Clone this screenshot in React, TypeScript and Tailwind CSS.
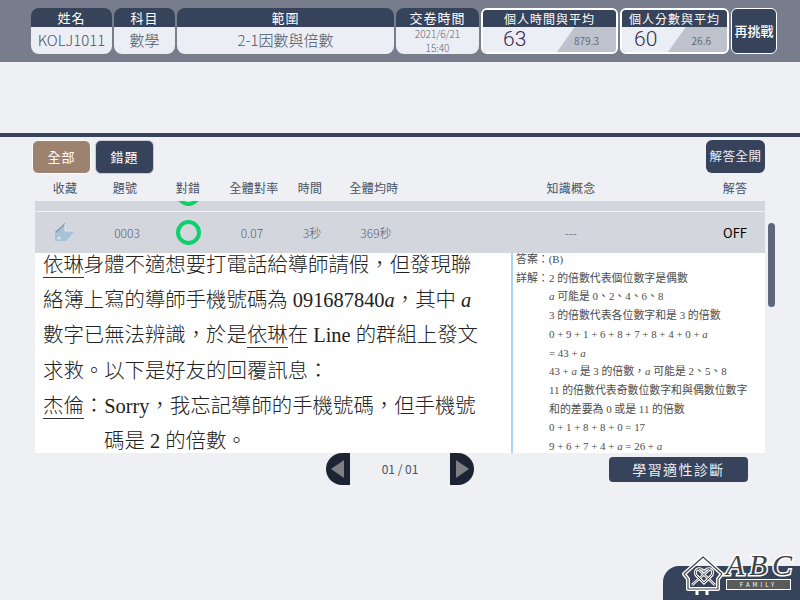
const font = "font-['Noto_Sans_CJK_TC','Noto_Sans',sans-serif]";

function InfoCell({ title, value, width }: { title: string; value: string; width: string }) {
  return (
    <div className={`${width} flex h-[46px] flex-col overflow-hidden rounded-lg`}>
      <div className="flex h-[19px] items-center justify-center bg-[#36435a] text-[13px] tracking-[1px] text-white">
        {title}
      </div>
      <div className="flex flex-1 items-center justify-center bg-[#eceef5] text-[15px] font-light text-[#4a5263]">
        {value}
      </div>
    </div>
  );
}

function ScoreCell({
  title,
  value,
  average,
  width,
  pad,
  avgPad,
}: {
  title: string;
  value: string;
  average: string;
  width: string;
  pad: string;
  avgPad: string;
}) {
  return (
    <div className={`${width} flex h-[46px] flex-col overflow-hidden rounded-md border-2 border-white`}>
      <div className="flex h-[17px] items-center justify-center bg-[#36435a] text-[12px] tracking-[1px] text-white">
        {title}
      </div>
      <div className="flex flex-1 items-stretch justify-between bg-[#eceef5]">
        <span className={`${pad} text-[21px] leading-[24px] font-light text-[#3d2a4d] font-['Roboto',sans-serif]`}>{value}</span>
        <span
          className={`${avgPad} flex w-[59px] items-center justify-end bg-[#bdc2cc] pt-0.5 text-[10px] text-[#646b7a] [clip-path:polygon(30%_0,100%_0,100%_100%,0_100%)]`}
        >
          {average}
        </span>
      </div>
    </div>
  );
}

function Header() {
  return (
    <header className="flex h-[62px] items-start gap-[2px] bg-[#777d8c] pt-2 pl-[31px]">
      <InfoCell title="姓名" value="KOLJ1011" width="w-[81px]" />
      <InfoCell title="科目" value="數學" width="w-[61px]" />
      <InfoCell title="範圍" value="2-1因數與倍數" width="w-[217px]" />
      <div className="flex h-[46px] w-[83px] flex-col overflow-hidden rounded-lg">
        <div className="flex h-[19px] items-center justify-center bg-[#36435a] text-[13px] tracking-[1px] text-white">
          交卷時間
        </div>
        <div className="flex flex-1 flex-col items-center justify-center bg-[#eceef5] text-[10px] leading-[14px] font-light text-[#5d6474]">
          <span>2021/6/21</span>
          <span>15:40</span>
        </div>
      </div>
      <ScoreCell title="個人時間與平均" value="63" average="879.3" width="w-[137px]" pad="pl-5" avgPad="pr-[17px]" />
      <ScoreCell title="個人分數與平均" value="60" average="26.6" width="w-[109px]" pad="pl-3" avgPad="pr-4" />
      <button className="flex h-[46px] w-[46px] items-center justify-center rounded-md border border-white bg-[#36435a] text-[13px] font-medium whitespace-nowrap text-white">
        再挑戰
      </button>
    </header>
  );
}

function Tabs() {
  return (
    <div className="flex h-[33px] items-center justify-between">
      <div className="flex gap-[4px]">
        <button className="h-[34px] w-[59px] rounded-md border border-white bg-[#9e8270] text-[13px] tracking-[1px] text-white">
          全部
        </button>
        <button className="h-[34px] w-[59px] rounded-md border border-[#c9ccd4] bg-[#36435a] text-[13px] tracking-[1px] text-white">
          錯題
        </button>
      </div>
      <button className="h-[33px] w-[59px] rounded-md bg-[#36435a] text-[12.5px] tracking-[0.5px] whitespace-nowrap text-[#eceef5]">
        解答全開
      </button>
    </div>
  );
}

const grid = "grid grid-cols-[60px_60px_66px_66px_46px_82px_290px_60px] items-center text-center";

function TagIcon() {
  return (
    <svg width="22" height="20" viewBox="0 0 22 20" className="mx-auto">
      <path d="M1 9 L11 0 L11 8 L21 8 L12 18 L1 18 Z" fill="#a5c4d8" />
      <path d="M1 9 L11 0 L11 2 L2 10 Z" fill="#8b95a3" />
      <path d="M11 1 L11 8 L20 8" fill="none" stroke="#f0f1f4" strokeWidth="0.8" />
      <circle cx="5" cy="15" r="1.5" fill="#e4e6ea" />
    </svg>
  );
}

function ResultTable() {
  const headers = ["收藏", "題號", "對錯", "全體對率", "時間", "全體均時"];
  return (
    <div className="mt-[1px] ml-[3px] w-[730px]">
      <div className={`${grid} h-[27px] pt-[1px] text-[12px] tracking-[0.3px] text-[#4a5263]`}>
        {headers.map((h) => (
          <span key={h}>{h}</span>
        ))}
        <span className="pl-[22px]">知識概念</span>
        <span>解答</span>
      </div>
      <div className="h-[11px] overflow-hidden border-b border-[#f0f1f4] bg-[#d3d6dd]">
        <span className="-mt-[20px] ml-[141px] block h-[25px] w-[25px] rounded-full border-[4px] border-[#0ed06c]" />
      </div>
      <div className={`${grid} h-[41px] bg-[#d3d6dd] text-[12px] font-light text-[#565d6c]`}>
        <TagIcon />
        <span className="pl-[4px]">0003</span>
        <span className="ml-[21px] block h-[25px] w-[25px] rounded-full border-[4px] border-[#0ed06c]" />
        <span className="pr-[4px]">0.07</span>
        <span className="pl-[4px]">3秒</span>
        <span className="pl-[4px]">369秒</span>
        <span className="pl-[22px]">---</span>
        <span className="text-[13px] font-normal text-black">OFF</span>
      </div>
    </div>
  );
}

function u(text: string) {
  return <span className="border-b border-[#333] pb-[1px]">{text}</span>;
}

function Question() {
  return (
    <div className="h-[200px] w-[476px] overflow-hidden pl-2 text-[20.4px] leading-[35.2px] font-light whitespace-nowrap text-[#222] font-['Liberation_Serif','Noto_Sans_CJK_TC',serif]">
      <div className="-mt-[5px]">{u("依琳")}身體不適想要打電話給導師請假，但發現聯</div>
      <div>
        絡簿上寫的導師手機號碼為 091687840<i>a</i>，其中 <i>a</i>
      </div>
      <div>數字已無法辨識，於是{u("依琳")}在 Line 的群組上發文</div>
      <div>求救。以下是好友的回覆訊息：</div>
      <div>{u("杰倫")}：Sorry，我忘記導師的手機號碼，但手機號</div>
      <div className="pl-[61px]">碼是 2 的倍數。</div>
    </div>
  );
}

function Explanation() {
  const lines = [
    <>2 的倍數代表個位數字是偶數</>,
    <>
      <i>a</i> 可能是 0、2、4、6、8
    </>,
    <>3 的倍數代表各位數字和是 3 的倍數</>,
    <>
      0 + 9 + 1 + 6 + 8 + 7 + 8 + 4 + 0 + <i>a</i>
    </>,
    <>
      = 43 + <i>a</i>
    </>,
    <>
      43 + <i>a</i> 是 3 的倍數，<i>a</i> 可能是 2、5、8
    </>,
    <>11 的倍數代表奇數位數字和與偶數位數字</>,
    <>和的差要為 0 或是 11 的倍數</>,
    <>0 + 1 + 8 + 8 + 0 = 17</>,
    <>
      9 + 6 + 7 + 4 + <i>a</i> = 26 + <i>a</i>
    </>,
  ];
  return (
    <div className="h-[200px] flex-1 overflow-hidden border-l-2 border-[#a9d6f2] pl-[3px] text-[10.9px] leading-[18.7px] whitespace-nowrap text-[#4b4b4b] font-['Liberation_Serif','Noto_Sans_CJK_TC',serif]">
      <div className="-mt-[3px]">答案：(B)</div>
      <div className="flex">
        <span className="w-[33px]">詳解：</span>
        <span>{lines[0]}</span>
      </div>
      {lines.slice(1).map((line, i) => (
        <div key={i} className="pl-[33px]">
          {line}
        </div>
      ))}
    </div>
  );
}

function Pager() {
  return (
    <div className="flex h-[32px] w-[148px] items-center justify-between">
      <button className="flex h-[32px] w-6 items-center justify-end rounded-l-full bg-[#1c2434] pr-[6px]">
        <svg width="13" height="18" viewBox="0 0 13 18">
          <path d="M13 0 V18 L0 9 Z" fill="#7e7f82" />
        </svg>
      </button>
      <span className="text-[12px] text-[#4a5263]">01 / 01</span>
      <button className="flex h-[32px] w-6 items-center justify-start rounded-r-full bg-[#1c2434] pl-[6px]">
        <svg width="13" height="18" viewBox="0 0 13 18">
          <path d="M0 0 V18 L13 9 Z" fill="#7e7f82" />
        </svg>
      </button>
    </div>
  );
}

const house = "M21 2 L2 19 L6 24 V34 H36 V24 L40 19 Z";
const heart = "M22 28 L14 20 C11 14 19 11 22 17 C25 11 33 14 30 20 Z";
const cross = "M10 30 L28 14 M33 30 L16 14";

function Logo() {
  return (
    <div className="absolute right-0 bottom-0 h-[34px] w-[137px] rounded-tl-2xl bg-[#36435a]">
      <svg width="44" height="42" viewBox="0 0 44 42" className="absolute -top-[11px] left-[19px]">
        <path d={house} fill="none" stroke="white" strokeWidth="4" strokeLinejoin="round" />
        <path d={house} fill="none" stroke="#444" strokeWidth="1.2" strokeLinejoin="round" />
        <path d={heart} fill="none" stroke="white" strokeWidth="3" />
        <path d={cross} stroke="white" strokeWidth="2.5" />
        <path d={heart} fill="none" stroke="#444" strokeWidth="1" />
        <path d={cross} stroke="#444" strokeWidth="0.8" />
        <path d="M15 35 V40 M25 35 V40" stroke="white" strokeWidth="3" />
      </svg>
      <div className="absolute -top-[17px] left-[63px] flex w-[66px] justify-between text-[30px] leading-[32px] text-[#444] italic font-['Liberation_Serif',serif] [-webkit-text-stroke:3px_white] [paint-order:stroke_fill]">
        <span>A</span>
        <span>B</span>
        <span>C</span>
      </div>
      <div className="absolute top-[13px] left-[63px] flex h-[11px] w-[65px] items-center justify-center border border-white bg-[#5a5a5a] text-[6px] leading-none tracking-[3px] text-white">
        FAMILY
      </div>
    </div>
  );
}

export default function App() {
  return (
    <div lang="zh-TW" className={`${font} relative h-[600px] w-[800px] overflow-hidden bg-[#eff0f4]`}>
      <Header />
      <div className="h-[71px]" />
      <div className="h-1 bg-[#36435a]" />
      <div className="relative pt-[3px] pr-[35px] pl-[32px]">
        <Tabs />
        <ResultTable />
        <div className="ml-[3px] flex w-[730px] bg-white">
          <Question />
          <Explanation />
        </div>
        <div className="absolute top-[86px] right-[25px] h-[84px] w-[7px] rounded-full bg-[#5d687e]" />
      </div>
      <div className="flex items-start pl-[326px]">
        <Pager />
        <button className="mt-[4px] ml-[135px] h-[25px] w-[139px] rounded bg-[#36435a] text-[14px] tracking-[1.4px] text-[#eceef5]">
          學習適性診斷
        </button>
      </div>
      <Logo />
    </div>
  );
}
